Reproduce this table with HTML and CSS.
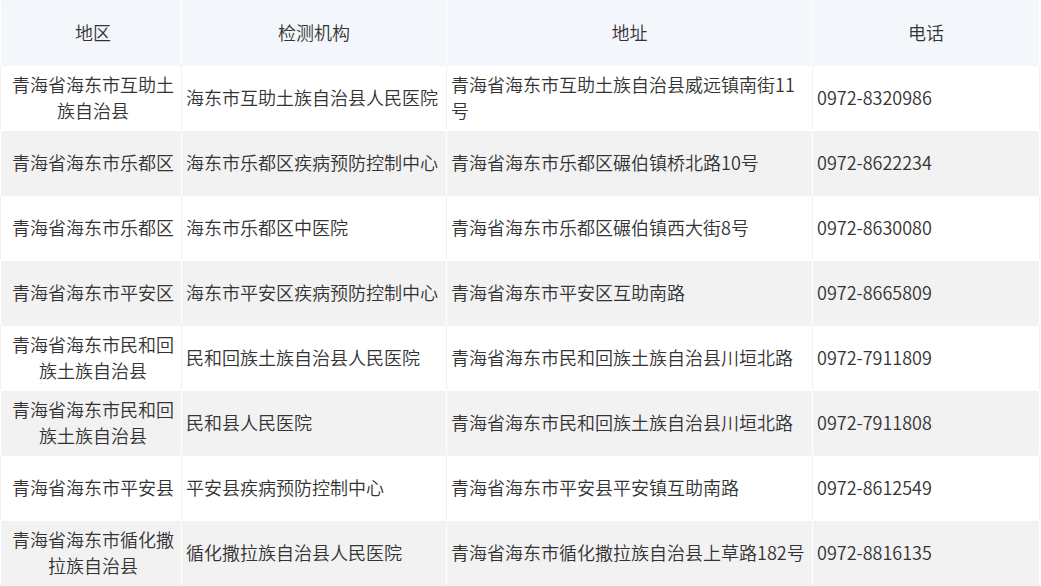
FILE: index.html
```html
<!DOCTYPE html>
<html lang="zh-CN">
<head>
<meta charset="utf-8">
<link rel="stylesheet" href="styles.css">
</head>
<body>
<table class="tbl">
  <colgroup>
    <col class="c1"><col class="c2"><col class="c3"><col class="c4">
  </colgroup>
  <thead>
    <tr><th class="region">地区</th><th>检测机构</th><th>地址</th><th>电话</th></tr>
  </thead>
  <tbody>
    <tr><td class="region">青海省海东市互助土族自治县</td><td>海东市互助土族自治县人民医院</td><td>青海省海东市互助土族自治县威远镇南街11号</td><td>0972-8320986</td></tr>
    <tr><td class="region">青海省海东市乐都区</td><td>海东市乐都区疾病预防控制中心</td><td>青海省海东市乐都区碾伯镇桥北路10号</td><td>0972-8622234</td></tr>
    <tr><td class="region">青海省海东市乐都区</td><td>海东市乐都区中医院</td><td>青海省海东市乐都区碾伯镇西大街8号</td><td>0972-8630080</td></tr>
    <tr><td class="region">青海省海东市平安区</td><td>海东市平安区疾病预防控制中心</td><td>青海省海东市平安区互助南路</td><td>0972-8665809</td></tr>
    <tr><td class="region">青海省海东市民和回族土族自治县</td><td>民和回族土族自治县人民医院</td><td>青海省海东市民和回族土族自治县川垣北路</td><td>0972-7911809</td></tr>
    <tr><td class="region">青海省海东市民和回族土族自治县</td><td>民和县人民医院</td><td>青海省海东市民和回族土族自治县川垣北路</td><td>0972-7911808</td></tr>
    <tr><td class="region">青海省海东市平安县</td><td>平安县疾病预防控制中心</td><td>青海省海东市平安县平安镇互助南路</td><td>0972-8612549</td></tr>
    <tr><td class="region">青海省海东市循化撒拉族自治县</td><td>循化撒拉族自治县人民医院</td><td>青海省海东市循化撒拉族自治县上草路182号</td><td>0972-8816135</td></tr>
  </tbody>
</table>
</body>
</html>
```

FILE: styles.css
```css
html, body {
  margin: 0;
  padding: 0;
  background: #ffffff;
}
.tbl {
  border-collapse: collapse;
  table-layout: fixed;
  width: 1039px;
  font-family: "Noto Sans CJK SC", "Microsoft YaHei", sans-serif;
  font-size: 18px;
  font-weight: 350;
  line-height: 26px;
  color: #333333;
}
.c1 { width: 181px; }
.c2 { width: 265px; }
.c3 { width: 366px; }
.c4 { width: 227px; }
.tbl th,
.tbl td {
  height: 65px;
  padding: 0 4px 2px 4px;
  border: 1px solid #f3f3f3;
  box-sizing: border-box;
  vertical-align: middle;
  text-align: left;
  word-break: break-all;
}
.tbl th {
  font-weight: 350;
  text-align: center;
  background: #f3f6fb;
  border-color: #f3f6fb #ffffff;
}
.tbl .region {
  text-align: center;
  padding-left: 8px;
}
.tbl tbody tr:nth-child(even) td {
  background: #f2f2f2;
  border-color: #f2f2f2 #ffffff;
}
.tbl tbody tr:nth-child(odd) td {
  background: #ffffff;
  border-color: #ffffff #f0f0f0;
}
```
